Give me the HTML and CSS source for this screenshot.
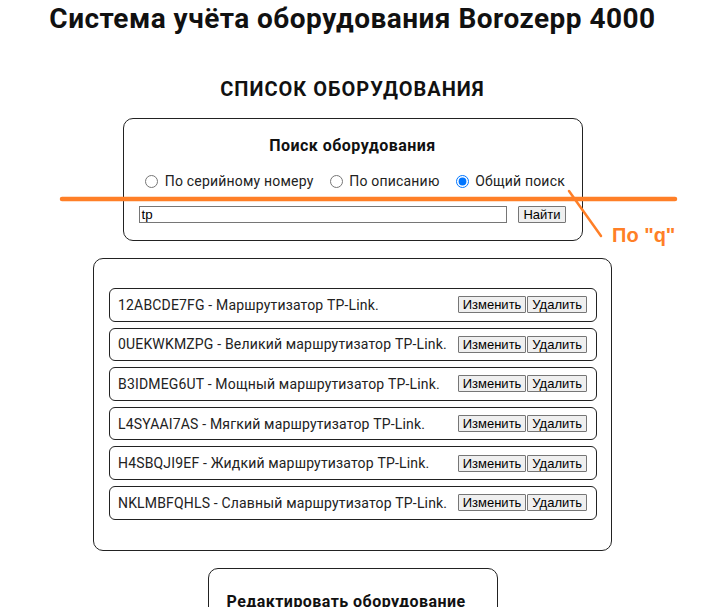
FILE: index.html
```html
<!DOCTYPE html>
<html lang="ru">
<head>
<meta charset="utf-8">
<title>Borozepp 4000</title>
<link rel="stylesheet" href="styles.css">
</head>
<body>
<div class="page">
  <h1 class="title">Система учёта оборудования Borozepp 4000</h1>
  <h2 class="subtitle">СПИСОК ОБОРУДОВАНИЯ</h2>

  <section class="box search-box">
    <h3 class="box-heading">Поиск оборудования</h3>
    <div class="radios">
      <label class="radio"><input type="radio" name="mode"> По серийному номеру</label>
      <label class="radio"><input type="radio" name="mode"> По описанию</label>
      <label class="radio"><input type="radio" name="mode" checked> Общий поиск</label>
    </div>
    <div class="search-row">
      <input class="search-input" type="text" value="tp">
      <button class="btn">Найти</button>
    </div>
  </section>

  <section class="box list-box">
    <div class="item"><span class="item-text">12ABCDE7FG - Маршрутизатор TP-Link.</span><span class="actions"><button class="btn">Изменить</button><button class="btn">Удалить</button></span></div>
    <div class="item"><span class="item-text">0UEKWKMZPG - Великий маршрутизатор TP-Link.</span><span class="actions"><button class="btn">Изменить</button><button class="btn">Удалить</button></span></div>
    <div class="item"><span class="item-text">B3IDMEG6UT - Мощный маршрутизатор TP-Link.</span><span class="actions"><button class="btn">Изменить</button><button class="btn">Удалить</button></span></div>
    <div class="item"><span class="item-text">L4SYAAI7AS - Мягкий маршрутизатор TP-Link.</span><span class="actions"><button class="btn">Изменить</button><button class="btn">Удалить</button></span></div>
    <div class="item"><span class="item-text">H4SBQJI9EF - Жидкий маршрутизатор TP-Link.</span><span class="actions"><button class="btn">Изменить</button><button class="btn">Удалить</button></span></div>
    <div class="item"><span class="item-text">NKLMBFQHLS - Славный маршрутизатор TP-Link.</span><span class="actions"><button class="btn">Изменить</button><button class="btn">Удалить</button></span></div>
  </section>

  <section class="box edit-box">
    <h3 class="edit-heading">Редактировать оборудование</h3>
  </section>
</div>

<svg class="annot-lines" width="707" height="607" viewBox="0 0 707 607">
  <line x1="62" y1="199" x2="675" y2="199" stroke="#ff7f27" stroke-width="4.5" stroke-linecap="round"/>
  <line x1="569" y1="191" x2="601" y2="236" stroke="#ff7f27" stroke-width="2.5" stroke-linecap="round"/>
</svg>
<div class="annot-text">По "q"</div>
</body>
</html>
```

FILE: styles.css
```css
html, body {
  margin: 0;
  padding: 0;
  background: #fff;
}
body {
  font-family: Roboto, "Noto Sans", sans-serif;
  color: #111;
  overflow: hidden;
}
.page {
  display: flex;
  flex-direction: column;
  align-items: center;
  padding-right: 2px;
}
.title {
  font-size: 28px;
  font-weight: 700;
  letter-spacing: 0.48px;
  margin: 2px 0 0;
  line-height: normal;
}
.subtitle {
  font-size: 20px;
  font-weight: 700;
  letter-spacing: 1px;
  margin: 42px 0 0;
  line-height: normal;
}
.box {
  border: 1px solid #222;
  border-radius: 10px;
  box-sizing: border-box;
}
.search-box {
  width: 460px;
  margin-top: 17px;
  padding: 17px 16px 17px;
  display: flex;
  flex-direction: column;
  align-items: center;
}
.box-heading {
  font-size: 16px;
  font-weight: 700;
  letter-spacing: 0.45px;
  margin: 0;
  line-height: normal;
}
.radios {
  display: flex;
  margin-top: 18px;
  font-size: 14px;
  letter-spacing: 0.2px;
  color: #222;
  line-height: normal;
}
.radio {
  display: flex;
  align-items: center;
  white-space: pre;
  margin-right: 11px;
}
.radio:last-child {
  margin-right: 0;
}
.radio input {
  margin: 0 3px 0 5px;
  width: 13px;
  height: 13px;
}
.search-row {
  display: flex;
  margin-top: 17px;
  gap: 11px;
}
.search-input {
  width: 368px;
  height: 17px;
  box-sizing: border-box;
  border: 1px solid #767676;
  padding: 0 1px;
  font-family: "Liberation Sans", Arial, sans-serif;
  font-size: 13.33px;
  margin: 0;
  color: #000;
}
.btn {
  height: 17px;
  box-sizing: border-box;
  border: 1px solid #767676;
  border-radius: 1px;
  background: #efefef;
  padding: 0 4px;
  font-family: "Liberation Sans", Arial, sans-serif;
  font-size: 13px;
  line-height: 13px;
  color: #000;
  margin: 0;
}
.list-box {
  width: 519px;
  margin-top: 17px;
  padding: 29px 14px 30px 15px;
  display: flex;
  flex-direction: column;
  gap: 6px;
}
.item {
  height: 33.6px;
  box-sizing: border-box;
  border: 1px solid #222;
  border-radius: 6px;
  display: flex;
  align-items: center;
  justify-content: space-between;
  padding: 0 9px 0 8px;
}
.item-text {
  font-size: 14px;
  letter-spacing: 0.17px;
  color: #222;
}
.actions {
  display: flex;
  gap: 1px;
}
.edit-box {
  width: 290px;
  height: 80px;
  margin-top: 17px;
  padding: 23px 18px;
}
.edit-heading {
  font-size: 16px;
  font-weight: 700;
  letter-spacing: 0.45px;
  margin: 0;
  line-height: normal;
  white-space: nowrap;
}
.annot-lines {
  position: absolute;
  left: 0;
  top: 0;
  pointer-events: none;
}
.annot-text {
  position: absolute;
  left: 612px;
  top: 224px;
  font-family: "Liberation Sans", Arial, sans-serif;
  font-weight: 700;
  font-size: 20px;
  color: #ff7f27;
  line-height: normal;
}
```
